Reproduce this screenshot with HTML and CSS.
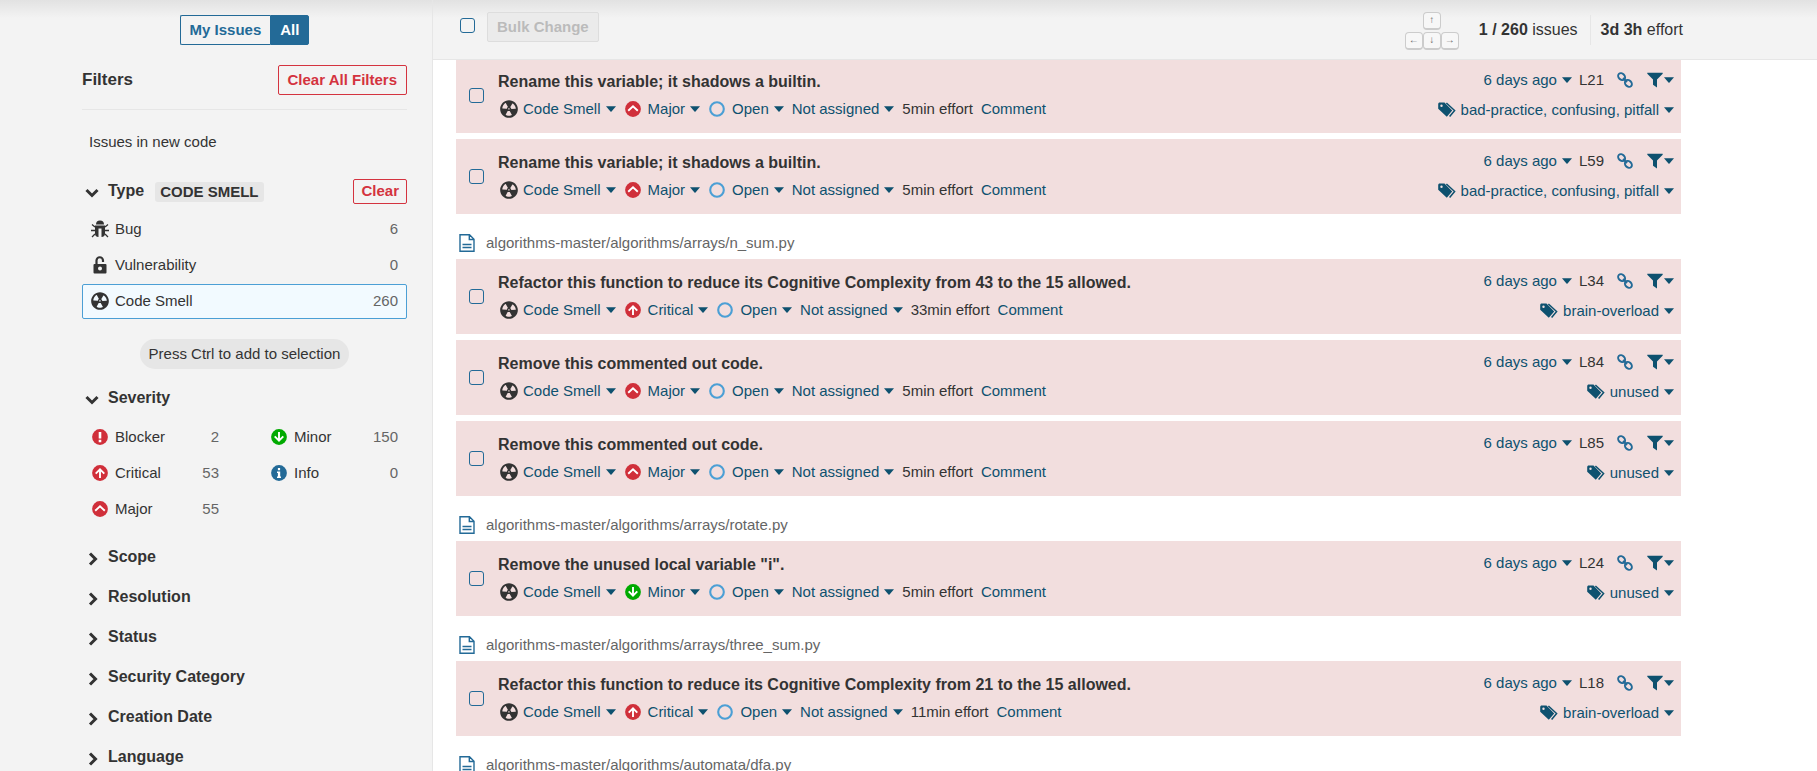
FILE: index.html
```html
<!DOCTYPE html>
<html lang="en">
<head>
<meta charset="utf-8">
<title>Issues</title>
<link rel="stylesheet" href="styles.css">
</head>
<body>
<svg class="sprite" aria-hidden="true">
  <symbol id="smell" viewBox="1.9 1.9 12.2 12.2"><path fill="currentColor" d="M8 2C4.7 2 2 4.7 2 8s2.7 6 6 6 6-2.7 6-6-2.700-6-6-6zm-.5 5.500h.9v.9h-.9v-.9zm-3.800.2c-.1 0-.2-.1-.2-.2 0-.4.1-1.200.6-2S5.300 4.200 5.600 4c.2 0 .3 0 .3.1l1.300 2.300c0 .1 0 .2-.1.2-.1.2-.2.3-.3.5-.1.2-.2.4-.2.5 0 .1-.1.2-.2.2l-2.700-.1zM9.900 12c-.3.2-1.100.5-2 .5-.9 0-1.700-.3-2-.5-.1 0-.1-.2-.1-.3l1.300-2.300c0-.1.1-.1.2-.1.2.1.3.1.5.1s.4 0 .5-.1c.1 0 .2 0 .2.1l1.300 2.300c.2.2.2.3.1.3zm2.500-4.100L9.700 8c-.1 0-.2-.1-.2-.2 0-.2-.1-.4-.2-.5 0-.1-.2-.3-.3-.4-.1 0-.1-.1-.1-.2l1.300-2.300c.1-.1.2-.1.3-.1.3.2 1 .7 1.500 1.500s.6 1.600.6 2c0 0-.1.1-.2.1z"/></symbol>
  <symbol id="bug" viewBox="0 0 18 18"><path fill="currentColor" d="M5 4.500a4 4 0 0 1 8 0zM4 5.500h10v8a4 3.500 0 0 1-3.500 3.500v-8.500h-3V17A4 3.500 0 0 1 4 13.500z"/><path fill="none" stroke="currentColor" stroke-width="1.300" d="M4 7 1 4.500M14 7l3-2.500M4 10.500H0M14 10.500h4M4 14l-3 3M14 14l3 3"/></symbol>
  <symbol id="lock" viewBox="0 0 18 18"><path fill="none" stroke="currentColor" stroke-width="2.200" d="M5.500 9V4.500a3.200 3.200 0 0 1 6.500 0V6"/><path fill="currentColor" fill-rule="evenodd" d="M3.500 8h11a1 1 0 0 1 1 1v7.500a1 1 0 0 1-1 1h-11a1 1 0 0 1-1-1V9a1 1 0 0 1 1-1zM9 10.500a2 2 0 1 0 0 4 2 2 0 0 0 0-4z"/></symbol>
  <symbol id="blocker" viewBox="0 0 18 18"><circle cx="9" cy="9" r="7.900" fill="#d02f3a"/><path fill="#fff" d="M7.700 4h2.600v6.500H7.700zM7.700 11.800h2.600v2.400H7.700z"/></symbol>
  <symbol id="critical" viewBox="0 0 18 18"><circle cx="9" cy="9" r="7.900" fill="#d02f3a"/><path fill="none" stroke="#fff" stroke-width="1.900" d="M9 14V5.500M4.700 9.700 9 5.400l4.300 4.300"/></symbol>
  <symbol id="major" viewBox="0 0 18 18"><circle cx="9" cy="9" r="7.900" fill="#d02f3a"/><path fill="none" stroke="#fff" stroke-width="1.900" d="M4.200 10.800 9 6.200l4.800 4.600"/></symbol>
  <symbol id="minor" viewBox="0 0 18 18"><circle cx="9" cy="9" r="7.900" fill="#00aa00"/><path fill="none" stroke="#fff" stroke-width="1.900" d="M9 4v8.500M4.700 8.300 9 12.600l4.300-4.300"/></symbol>
  <symbol id="info" viewBox="0 0 18 18"><circle cx="9" cy="9" r="7.900" fill="#236a97"/><path fill="#fff" d="M7.900 4h2.200v2.200H7.900zM7 7.500h3.200v5H11v1.400H7v-1.400h.9V8.900H7z"/></symbol>
  <symbol id="open" viewBox="0 0 18 18"><circle cx="9" cy="9" r="6.800" fill="none" stroke="#4b9fd5" stroke-width="2.100"/></symbol>
  <symbol id="caret" viewBox="0 0 10 6"><path fill="currentColor" d="M0 .300h10L5.300 5.700h-.6z"/></symbol>
  <symbol id="down" viewBox="0 0 14 10"><path fill="none" stroke="currentColor" stroke-width="3" d="M1.500 2 7 7.500 12.500 2"/></symbol>
  <symbol id="right" viewBox="0 0 14 14"><path fill="none" stroke="currentColor" stroke-width="3" d="M5 1.500 10.500 7 5 12.500"/></symbol>
  <symbol id="file" viewBox="0 0 16 18"><path fill="none" stroke="#236a97" stroke-width="1.400" d="M1 .800h9.500L15 5.300v11.900H1zM10.300.800v4.700H15M3.500 10.500h9M3.500 13.500h9"/></symbol>
  <symbol id="link" viewBox="0 0 16 16"><g fill="none" stroke="#236a97" stroke-width="2"><ellipse cx="4.600" cy="4.600" rx="3.800" ry="3" transform="rotate(45 4.600 4.600)"/><ellipse cx="11.400" cy="11.400" rx="3.800" ry="3" transform="rotate(45 11.400 11.400)"/><path d="m6 6 4 4"/></g></symbol>
  <symbol id="filter" viewBox="0 0 16 16"><path fill="currentColor" d="M.3.800h15.400v.9L10 7.400v8.100L6 12.700V7.400L.3 1.700z"/></symbol>
  <symbol id="tags" viewBox="0 0 18 16"><path fill="currentColor" fill-rule="evenodd" d="M.2 2.300C.2 1.200.8.600 1.800.600h4.700l7.700 7.800-5.400 6.400L.2 6.800zM3.500 2.500a1.200 1.200 0 1 0 0 2.400 1.200 1.200 0 0 0 0-2.400z"/><path fill="none" stroke="currentColor" stroke-width="1.500" d="M8.400 1 16.600 8.500l-5 6"/></symbol>
</svg>

<div class="layout">
  <aside class="sidebar">
    <div class="toggle">
      <button class="btn btn-left" type="button">My Issues</button>
      <button class="btn btn-on" type="button">All</button>
    </div>
    <div class="filters-head">
      <h2>Filters</h2>
      <button class="btn btn-red" type="button">Clear All Filters</button>
    </div>
    <p class="new-code">Issues in new code</p>

    <section class="facet">
      <div class="facet-head">
        <button class="facet-toggle" type="button"><svg class="down"><use href="#down"/></svg>Type</button>
        <span class="chip">CODE SMELL</span>
        <button class="btn btn-red btn-small" type="button">Clear</button>
      </div>
      <div class="items">
        <a class="item" href="#"><svg class="icon"><use href="#bug"/></svg>Bug<span class="count">6</span></a>
        <a class="item" href="#"><svg class="icon"><use href="#lock"/></svg>Vulnerability<span class="count">0</span></a>
        <a class="item active" href="#"><svg class="icon"><use href="#smell"/></svg>Code Smell<span class="count">260</span></a>
      </div>
      <p class="hint">Press Ctrl to add to selection</p>
    </section>

    <section class="facet">
      <div class="facet-head"><button class="facet-toggle" type="button"><svg class="down"><use href="#down"/></svg>Severity</button></div>
      <div class="items two">
        <a class="item" href="#"><svg class="icon"><use href="#blocker"/></svg>Blocker<span class="count">2</span></a>
        <a class="item" href="#"><svg class="icon"><use href="#minor"/></svg>Minor<span class="count">150</span></a>
        <a class="item" href="#"><svg class="icon"><use href="#critical"/></svg>Critical<span class="count">53</span></a>
        <a class="item" href="#"><svg class="icon"><use href="#info"/></svg>Info<span class="count">0</span></a>
        <a class="item" href="#"><svg class="icon"><use href="#major"/></svg>Major<span class="count">55</span></a>
      </div>
    </section>

    <div class="closed">
      <button class="facet-toggle" type="button"><svg class="right"><use href="#right"/></svg>Scope</button>
      <button class="facet-toggle" type="button"><svg class="right"><use href="#right"/></svg>Resolution</button>
      <button class="facet-toggle" type="button"><svg class="right"><use href="#right"/></svg>Status</button>
      <button class="facet-toggle" type="button"><svg class="right"><use href="#right"/></svg>Security Category</button>
      <button class="facet-toggle" type="button"><svg class="right"><use href="#right"/></svg>Creation Date</button>
      <button class="facet-toggle" type="button"><svg class="right"><use href="#right"/></svg>Language</button>
    </div>
  </aside>

  <main class="main">
    <header class="toolbar">
      <div class="bulk">
        <input class="check" type="checkbox" aria-label="Select all issues">
        <button class="btn btn-disabled" type="button" disabled>Bulk Change</button>
      </div>
      <div class="summary">
        <div class="keys"><kbd class="key up">↑</kbd><kbd class="key">←</kbd><kbd class="key">↓</kbd><kbd class="key">→</kbd></div>
        <span class="total"><b>1 / 260</b> issues</span>
        <span class="effort"><b>3d 3h</b> effort</span>
      </div>
    </header>

    <div class="list">
      <article class="issue">
        <input class="check" type="checkbox" aria-label="Select issue">
        <div class="body">
          <h3>Rename this variable; it shadows a builtin.</h3>
          <div class="meta">
            <button class="pick" type="button"><svg class="icon dark"><use href="#smell"/></svg>Code Smell<svg class="caret"><use href="#caret"/></svg></button>
            <button class="pick wide" type="button"><svg class="icon"><use href="#major"/></svg>Major<svg class="caret"><use href="#caret"/></svg></button>
            <button class="pick wide" type="button"><svg class="icon"><use href="#open"/></svg>Open<svg class="caret"><use href="#caret"/></svg></button>
            <button class="pick" type="button">Not assigned<svg class="caret"><use href="#caret"/></svg></button>
            <span>5min effort</span>
            <button class="pick" type="button">Comment</button>
          </div>
        </div>
        <div class="side">
          <div class="when"><button class="pick" type="button">6 days ago<svg class="caret"><use href="#caret"/></svg></button><span>L21</span><a class="permalink" href="#" aria-label="Permalink"><svg class="glyph"><use href="#link"/></svg></a><button class="pick similar" type="button" aria-label="Similar issues"><svg class="glyph"><use href="#filter"/></svg><svg class="caret"><use href="#caret"/></svg></button></div>
          <button class="pick tags" type="button"><svg class="tag"><use href="#tags"/></svg>bad-practice, confusing, pitfall<svg class="caret"><use href="#caret"/></svg></button>
        </div>
      </article>

      <article class="issue">
        <input class="check" type="checkbox" aria-label="Select issue">
        <div class="body">
          <h3>Rename this variable; it shadows a builtin.</h3>
          <div class="meta">
            <button class="pick" type="button"><svg class="icon dark"><use href="#smell"/></svg>Code Smell<svg class="caret"><use href="#caret"/></svg></button>
            <button class="pick wide" type="button"><svg class="icon"><use href="#major"/></svg>Major<svg class="caret"><use href="#caret"/></svg></button>
            <button class="pick wide" type="button"><svg class="icon"><use href="#open"/></svg>Open<svg class="caret"><use href="#caret"/></svg></button>
            <button class="pick" type="button">Not assigned<svg class="caret"><use href="#caret"/></svg></button>
            <span>5min effort</span>
            <button class="pick" type="button">Comment</button>
          </div>
        </div>
        <div class="side">
          <div class="when"><button class="pick" type="button">6 days ago<svg class="caret"><use href="#caret"/></svg></button><span>L59</span><a class="permalink" href="#" aria-label="Permalink"><svg class="glyph"><use href="#link"/></svg></a><button class="pick similar" type="button" aria-label="Similar issues"><svg class="glyph"><use href="#filter"/></svg><svg class="caret"><use href="#caret"/></svg></button></div>
          <button class="pick tags" type="button"><svg class="tag"><use href="#tags"/></svg>bad-practice, confusing, pitfall<svg class="caret"><use href="#caret"/></svg></button>
        </div>
      </article>

      <p class="file"><svg class="doc"><use href="#file"/></svg>algorithms-master/algorithms/arrays/n_sum.py</p>

      <article class="issue">
        <input class="check" type="checkbox" aria-label="Select issue">
        <div class="body">
          <h3>Refactor this function to reduce its Cognitive Complexity from 43 to the 15 allowed.</h3>
          <div class="meta">
            <button class="pick" type="button"><svg class="icon dark"><use href="#smell"/></svg>Code Smell<svg class="caret"><use href="#caret"/></svg></button>
            <button class="pick wide" type="button"><svg class="icon"><use href="#critical"/></svg>Critical<svg class="caret"><use href="#caret"/></svg></button>
            <button class="pick wide" type="button"><svg class="icon"><use href="#open"/></svg>Open<svg class="caret"><use href="#caret"/></svg></button>
            <button class="pick" type="button">Not assigned<svg class="caret"><use href="#caret"/></svg></button>
            <span>33min effort</span>
            <button class="pick" type="button">Comment</button>
          </div>
        </div>
        <div class="side">
          <div class="when"><button class="pick" type="button">6 days ago<svg class="caret"><use href="#caret"/></svg></button><span>L34</span><a class="permalink" href="#" aria-label="Permalink"><svg class="glyph"><use href="#link"/></svg></a><button class="pick similar" type="button" aria-label="Similar issues"><svg class="glyph"><use href="#filter"/></svg><svg class="caret"><use href="#caret"/></svg></button></div>
          <button class="pick tags" type="button"><svg class="tag"><use href="#tags"/></svg>brain-overload<svg class="caret"><use href="#caret"/></svg></button>
        </div>
      </article>

      <article class="issue">
        <input class="check" type="checkbox" aria-label="Select issue">
        <div class="body">
          <h3>Remove this commented out code.</h3>
          <div class="meta">
            <button class="pick" type="button"><svg class="icon dark"><use href="#smell"/></svg>Code Smell<svg class="caret"><use href="#caret"/></svg></button>
            <button class="pick wide" type="button"><svg class="icon"><use href="#major"/></svg>Major<svg class="caret"><use href="#caret"/></svg></button>
            <button class="pick wide" type="button"><svg class="icon"><use href="#open"/></svg>Open<svg class="caret"><use href="#caret"/></svg></button>
            <button class="pick" type="button">Not assigned<svg class="caret"><use href="#caret"/></svg></button>
            <span>5min effort</span>
            <button class="pick" type="button">Comment</button>
          </div>
        </div>
        <div class="side">
          <div class="when"><button class="pick" type="button">6 days ago<svg class="caret"><use href="#caret"/></svg></button><span>L84</span><a class="permalink" href="#" aria-label="Permalink"><svg class="glyph"><use href="#link"/></svg></a><button class="pick similar" type="button" aria-label="Similar issues"><svg class="glyph"><use href="#filter"/></svg><svg class="caret"><use href="#caret"/></svg></button></div>
          <button class="pick tags" type="button"><svg class="tag"><use href="#tags"/></svg>unused<svg class="caret"><use href="#caret"/></svg></button>
        </div>
      </article>

      <article class="issue">
        <input class="check" type="checkbox" aria-label="Select issue">
        <div class="body">
          <h3>Remove this commented out code.</h3>
          <div class="meta">
            <button class="pick" type="button"><svg class="icon dark"><use href="#smell"/></svg>Code Smell<svg class="caret"><use href="#caret"/></svg></button>
            <button class="pick wide" type="button"><svg class="icon"><use href="#major"/></svg>Major<svg class="caret"><use href="#caret"/></svg></button>
            <button class="pick wide" type="button"><svg class="icon"><use href="#open"/></svg>Open<svg class="caret"><use href="#caret"/></svg></button>
            <button class="pick" type="button">Not assigned<svg class="caret"><use href="#caret"/></svg></button>
            <span>5min effort</span>
            <button class="pick" type="button">Comment</button>
          </div>
        </div>
        <div class="side">
          <div class="when"><button class="pick" type="button">6 days ago<svg class="caret"><use href="#caret"/></svg></button><span>L85</span><a class="permalink" href="#" aria-label="Permalink"><svg class="glyph"><use href="#link"/></svg></a><button class="pick similar" type="button" aria-label="Similar issues"><svg class="glyph"><use href="#filter"/></svg><svg class="caret"><use href="#caret"/></svg></button></div>
          <button class="pick tags" type="button"><svg class="tag"><use href="#tags"/></svg>unused<svg class="caret"><use href="#caret"/></svg></button>
        </div>
      </article>

      <p class="file"><svg class="doc"><use href="#file"/></svg>algorithms-master/algorithms/arrays/rotate.py</p>

      <article class="issue">
        <input class="check" type="checkbox" aria-label="Select issue">
        <div class="body">
          <h3>Remove the unused local variable "i".</h3>
          <div class="meta">
            <button class="pick" type="button"><svg class="icon dark"><use href="#smell"/></svg>Code Smell<svg class="caret"><use href="#caret"/></svg></button>
            <button class="pick wide" type="button"><svg class="icon"><use href="#minor"/></svg>Minor<svg class="caret"><use href="#caret"/></svg></button>
            <button class="pick wide" type="button"><svg class="icon"><use href="#open"/></svg>Open<svg class="caret"><use href="#caret"/></svg></button>
            <button class="pick" type="button">Not assigned<svg class="caret"><use href="#caret"/></svg></button>
            <span>5min effort</span>
            <button class="pick" type="button">Comment</button>
          </div>
        </div>
        <div class="side">
          <div class="when"><button class="pick" type="button">6 days ago<svg class="caret"><use href="#caret"/></svg></button><span>L24</span><a class="permalink" href="#" aria-label="Permalink"><svg class="glyph"><use href="#link"/></svg></a><button class="pick similar" type="button" aria-label="Similar issues"><svg class="glyph"><use href="#filter"/></svg><svg class="caret"><use href="#caret"/></svg></button></div>
          <button class="pick tags" type="button"><svg class="tag"><use href="#tags"/></svg>unused<svg class="caret"><use href="#caret"/></svg></button>
        </div>
      </article>

      <p class="file"><svg class="doc"><use href="#file"/></svg>algorithms-master/algorithms/arrays/three_sum.py</p>

      <article class="issue">
        <input class="check" type="checkbox" aria-label="Select issue">
        <div class="body">
          <h3>Refactor this function to reduce its Cognitive Complexity from 21 to the 15 allowed.</h3>
          <div class="meta">
            <button class="pick" type="button"><svg class="icon dark"><use href="#smell"/></svg>Code Smell<svg class="caret"><use href="#caret"/></svg></button>
            <button class="pick wide" type="button"><svg class="icon"><use href="#critical"/></svg>Critical<svg class="caret"><use href="#caret"/></svg></button>
            <button class="pick wide" type="button"><svg class="icon"><use href="#open"/></svg>Open<svg class="caret"><use href="#caret"/></svg></button>
            <button class="pick" type="button">Not assigned<svg class="caret"><use href="#caret"/></svg></button>
            <span>11min effort</span>
            <button class="pick" type="button">Comment</button>
          </div>
        </div>
        <div class="side">
          <div class="when"><button class="pick" type="button">6 days ago<svg class="caret"><use href="#caret"/></svg></button><span>L18</span><a class="permalink" href="#" aria-label="Permalink"><svg class="glyph"><use href="#link"/></svg></a><button class="pick similar" type="button" aria-label="Similar issues"><svg class="glyph"><use href="#filter"/></svg><svg class="caret"><use href="#caret"/></svg></button></div>
          <button class="pick tags" type="button"><svg class="tag"><use href="#tags"/></svg>brain-overload<svg class="caret"><use href="#caret"/></svg></button>
        </div>
      </article>

      <p class="file"><svg class="doc"><use href="#file"/></svg>algorithms-master/algorithms/automata/dfa.py</p>
    </div>
  </main>
</div>
</body>
</html>
```

FILE: styles.css
```css
* {
  box-sizing: border-box;
}

body {
  margin: 0;
  font: 15px/20px "Liberation Sans", Arial, sans-serif;
  color: #333;
  background: #fff;
}

h2,
h3,
p {
  margin: 0;
}

button {
  margin: 0;
  padding: 0;
  border: 0;
  background: none;
  color: inherit;
  font: inherit;
  cursor: pointer;
}

a {
  color: inherit;
  text-decoration: none;
}

svg {
  display: block;
  flex: none;
}

.sprite {
  position: absolute;
  width: 0;
  height: 0;
}

.layout {
  display: flex;
  height: 100vh;
  overflow: hidden;
}

/* Sidebar */

.sidebar {
  flex: none;
  width: 433px;
  padding: 15px 25px 0 82px;
  border-right: 1px solid #e6e6e6;
  background: linear-gradient(#e2e2e2, #f3f3f3 18px);
}

.btn {
  height: 30px;
  padding: 0 9px;
  border: 1px solid #236a97;
  border-radius: 2px;
  color: #236a97;
  font-weight: bold;
}

.btn-left {
  border-right: 0;
  border-radius: 2px 0 0 2px;
}

.btn-on {
  border-radius: 0 2px 2px 0;
  background: #236a97;
  color: #fff;
}

.btn-red {
  border-color: #d4333f;
  color: #d4333f;
}

.btn-small {
  height: 25px;
  padding: 0 7px 2px;
  margin-left: auto;
}

.btn-disabled {
  border-color: #ddd;
  background: #ebebeb;
  color: #bbb;
  cursor: default;
}

.toggle {
  display: flex;
  justify-content: center;
}

.filters-head {
  display: flex;
  align-items: center;
  justify-content: space-between;
  margin-top: 20px;
  padding-bottom: 14px;
  border-bottom: 1px solid #e6e6e6;
}

.filters-head h2 {
  font-size: 17px;
}

.new-code {
  margin-top: 22px;
  padding-left: 7px;
}

.facet {
  margin-top: 17px;
}

.new-code + .facet {
  margin-top: 27px;
}

.facet-head {
  display: flex;
  align-items: center;
  height: 25px;
}

.facet-toggle {
  display: flex;
  align-items: center;
  gap: 9px;
  height: 25px;
  padding-left: 3px;
  padding-bottom: 2px;
  font-size: 16px;
  font-weight: bold;
}

.down {
  width: 14px;
  height: 10px;
  margin-top: 4px;
}

.right {
  width: 14px;
  height: 14px;
  margin-top: 4px;
}

.chip {
  margin-left: 11px;
  padding: 0 5px;
  border-radius: 3px;
  background: #e6e6e6;
  font-weight: bold;
}

.items {
  display: grid;
  row-gap: 1px;
  margin-top: 8px;
}

.two {
  grid-template-columns: 1fr 1fr;
  column-gap: 33px;
  margin-top: 9px;
}

.item {
  display: flex;
  align-items: center;
  gap: 6px;
  height: 35px;
  padding: 0 8px 1px;
  border: 1px solid transparent;
  border-radius: 2px;
}

.active {
  border-color: #4b9fd5;
  background: #f2faff;
}

.count {
  margin-left: auto;
  color: #656565;
}

.icon {
  width: 18px;
  height: 18px;
}

.hint {
  width: max-content;
  margin: 20px auto 0;
  padding: 5px 9px;
  border-radius: 15px;
  background: #e6e6e6;
}

.closed {
  display: flex;
  flex-direction: column;
  align-items: flex-start;
  gap: 15px;
  margin-top: 18px;
}

/* Issue list */

.main {
  flex: 1;
  min-width: 0;
}

.toolbar {
  position: relative;
  display: flex;
  justify-content: space-between;
  height: 60px;
  padding: 12px 134px 0 27px;
  border-bottom: 1px solid #e6e6e6;
  background: linear-gradient(#e2e2e2, #f3f3f3 18px);
}

.bulk {
  display: flex;
  gap: 12px;
}

.check {
  flex: none;
  width: 15px;
  height: 15px;
  margin: 0;
  appearance: none;
  border: 1px solid #236a97;
  border-radius: 3px;
}

.bulk .check {
  margin-top: 6px;
}

.summary {
  display: flex;
  align-items: flex-start;
  font-size: 16px;
  line-height: 30px;
}

.total {
  margin: 3px 12px 0 20px;
}

.effort {
  margin-top: 3px;
  padding-left: 10px;
  border-left: 1px solid #e6e6e6;
}

.keys {
  display: grid;
  grid-template-columns: 18px 18px 18px;
  row-gap: 2px;
}

.key {
  height: 18px;
  border: 1px solid #ccc;
  border-bottom-width: 2px;
  border-radius: 4px;
  background: #f7f7f7;
  color: #666;
  font: 10px/14px "Liberation Sans", sans-serif;
  text-align: center;
}

.up {
  grid-column: 2;
}

.key.up + .key {
  grid-column: 1;
}

.list {
  margin-top: -2px;
  padding: 0 136px 0 23px;
}

.issue {
  display: flex;
  align-items: flex-start;
  height: 75px;
  padding: 12px 7px 0 13px;
  background: #f2dede;
}

.issue + .issue {
  margin-top: 6px;
}

.issue .check {
  margin: 18px 14px 0 0;
}

.body {
  flex: 1;
}

.body h3 {
  font-size: 16px;
  line-height: 24px;
}

.meta {
  display: flex;
  align-items: center;
  gap: 8px;
  margin-top: 5px;
}

.pick {
  display: flex;
  align-items: center;
  gap: 5px;
  color: #0e516f;
}

.wide .icon {
  margin-right: 1px;
}

.dark {
  margin-left: 2px;
  color: #333;
}

.caret {
  width: 10px;
  height: 6px;
}

.side {
  display: flex;
  flex-direction: column;
  align-items: flex-end;
  gap: 10px;
}

.when {
  display: flex;
  align-items: center;
}

.when span {
  margin: 0 13px 0 7px;
}

.glyph {
  width: 16px;
  height: 16px;
}

.similar {
  gap: 1px;
  margin-left: 14px;
}

.tag {
  width: 18px;
  height: 16px;
}

.file {
  display: flex;
  align-items: center;
  gap: 11px;
  padding: 19px 0 6px 3px;
  color: #656565;
}

.doc {
  width: 16px;
  height: 18px;
}
```
